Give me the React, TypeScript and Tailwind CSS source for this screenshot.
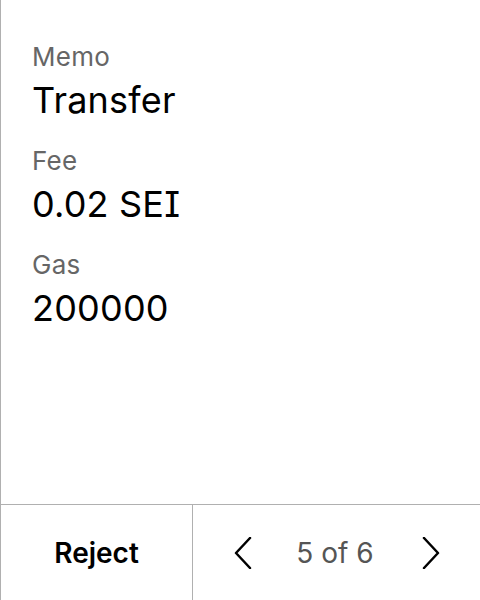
import React from 'react';

const rows = [
  { label: 'Memo', value: 'Transfer' },
  { label: 'Fee', value: '0.02 SEI' },
  { label: 'Gas', value: '200000' },
];

const Chevron: React.FC<{ dir: 'left' | 'right' }> = ({ dir }) => (
  <svg width="18" height="32" viewBox="0 0 18 32" fill="none" stroke="#000" strokeWidth="2.5" strokeLinecap="round" strokeLinejoin="round">
    {dir === 'left' ? <path d="M16 1L2 16l14 15" /> : <path d="M2 1l14 15L2 31" />}
  </svg>
);

export default function App() {
  return (
    <div className="h-[600px] w-[480px] bg-white border-l border-[#b0b0b0] flex flex-col font-['Inter',sans-serif] [font-feature-settings:'cv08']">
      <div className="flex-1 pl-[31px] pt-[37px] flex flex-col gap-[18px]">
        {rows.map(r => (
          <div key={r.label} className="flex flex-col">
            <span className="text-[26px] leading-[40px] text-[#666] tracking-[0.3px]">{r.label}</span>
            <span className="text-[36px] leading-[46px] text-black tracking-[0.2px]">{r.value}</span>
          </div>
        ))}
      </div>
      <div className="h-[96px] border-t border-[#b0b0b0] flex">
        <button className="w-[192px] border-r border-[#b0b0b0] flex items-center justify-center text-[28px] font-semibold text-black">
          Reject
        </button>
        <div className="flex-1 flex items-center justify-between pl-[41px] pr-[40px]">
          <Chevron dir="left" />
          <span className="text-[28px] text-[#555] -ml-1">5 of 6</span>
          <Chevron dir="right" />
        </div>
      </div>
    </div>
  );
}
